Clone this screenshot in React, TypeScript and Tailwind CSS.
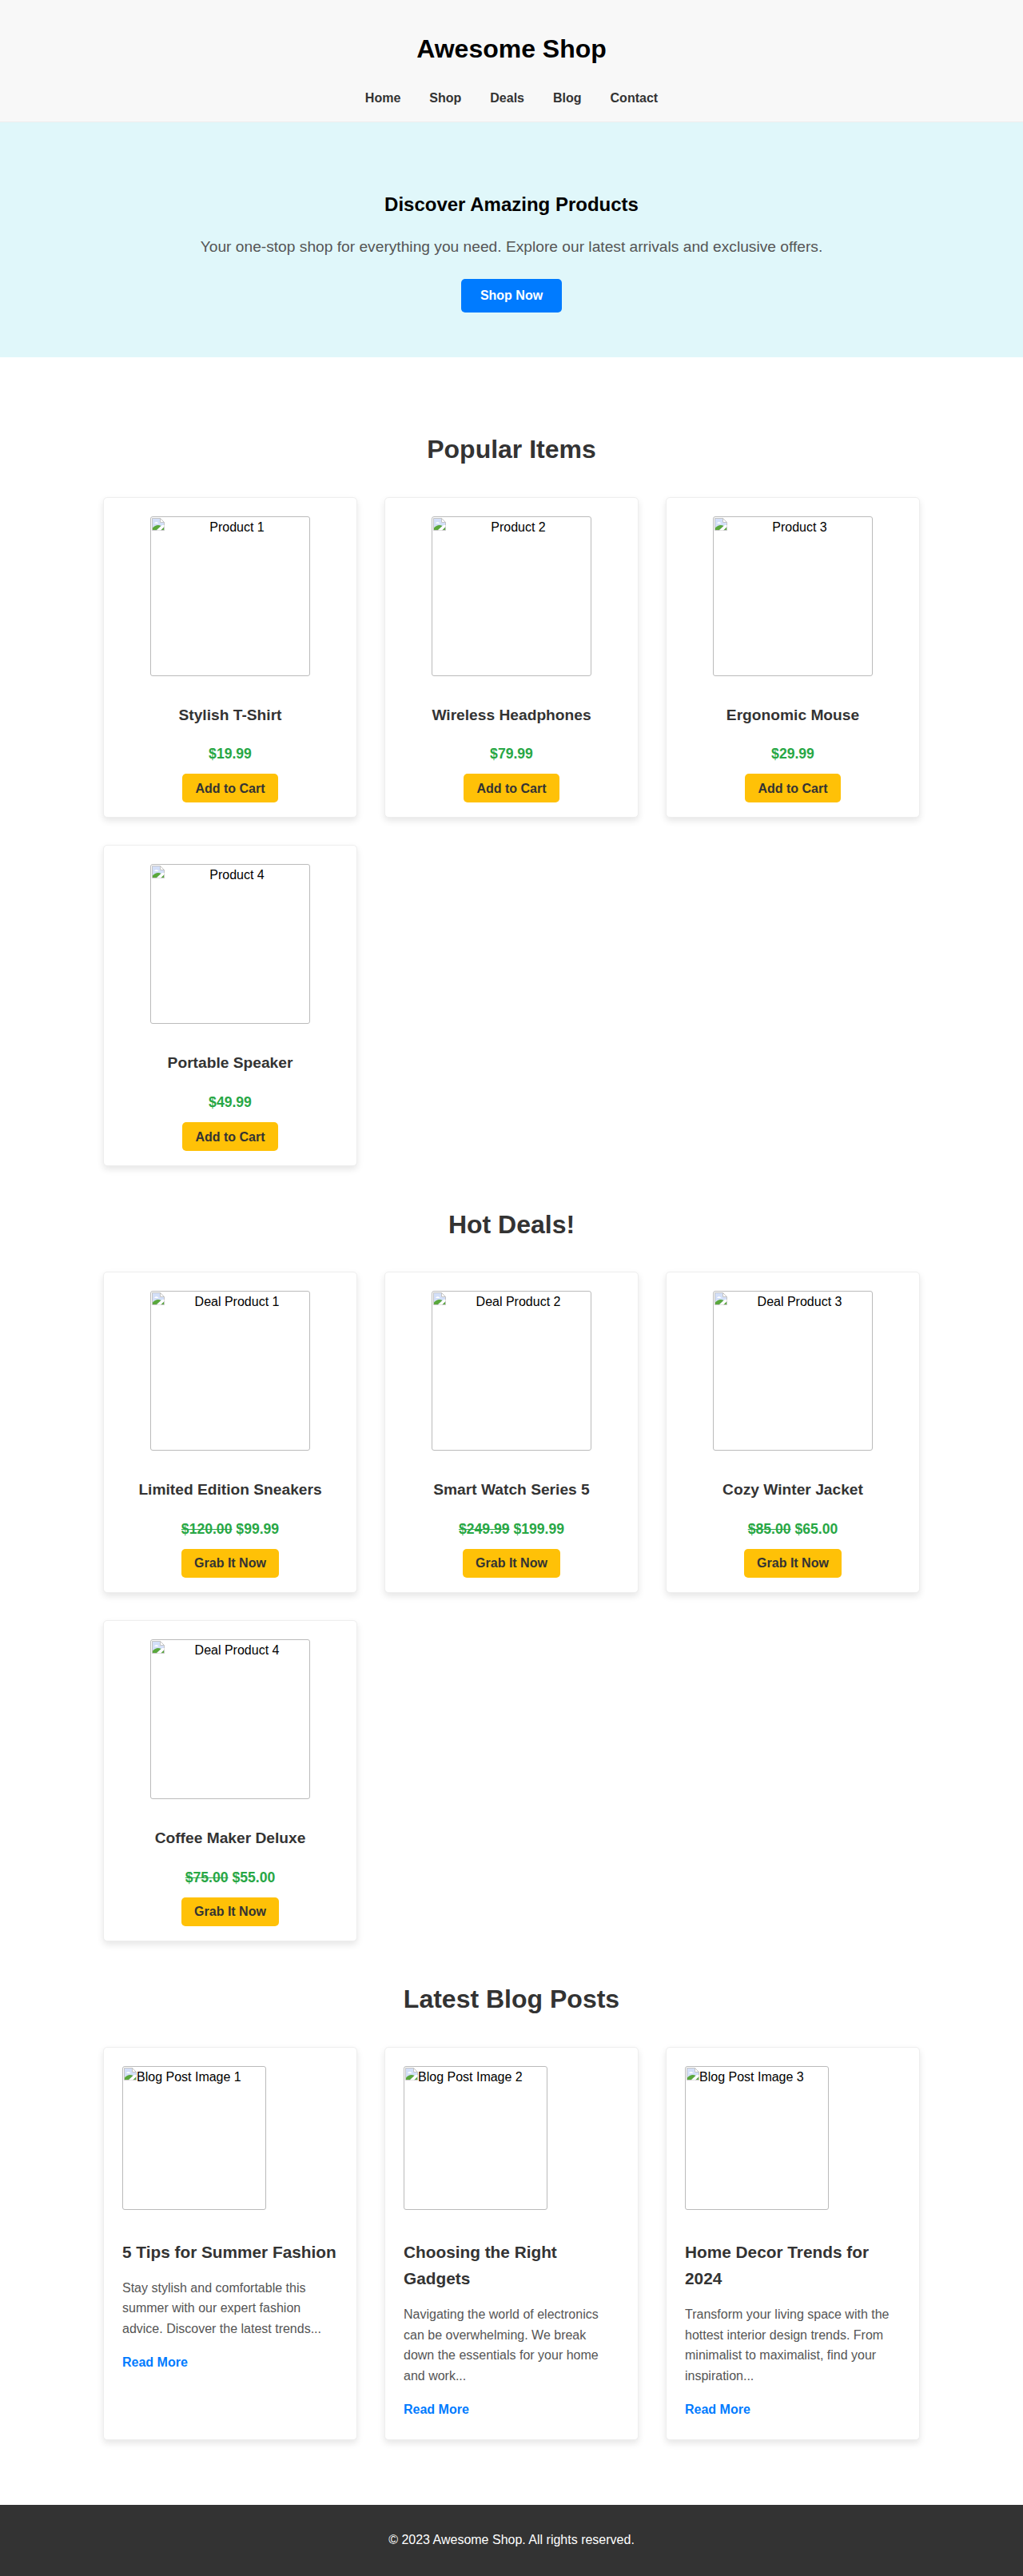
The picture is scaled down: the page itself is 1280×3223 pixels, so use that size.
const sans = "font-['Liberation_Sans',Arial,sans-serif]"

const products = [
  { alt: "Product 1", name: "Stylish T-Shirt", price: "$19.99" },
  { alt: "Product 2", name: "Wireless Headphones", price: "$79.99" },
  { alt: "Product 3", name: "Ergonomic Mouse", price: "$29.99" },
  { alt: "Product 4", name: "Portable Speaker", price: "$49.99" },
]

const deals = [
  { alt: "Deal Product 1", name: "Limited Edition Sneakers", old: "$120.00", price: "$99.99" },
  { alt: "Deal Product 2", name: "Smart Watch Series 5", old: "$249.99", price: "$199.99" },
  { alt: "Deal Product 3", name: "Cozy Winter Jacket", old: "$85.00", price: "$65.00" },
  { alt: "Deal Product 4", name: "Coffee Maker Deluxe", old: "$75.00", price: "$55.00" },
]

const posts = [
  {
    alt: "Blog Post Image 1",
    title: "5 Tips for Summer Fashion",
    text: "Stay stylish and comfortable this summer with our expert fashion advice. Discover the latest trends...",
  },
  {
    alt: "Blog Post Image 2",
    title: "Choosing the Right Gadgets",
    text: "Navigating the world of electronics can be overwhelming. We break down the essentials for your home and work...",
  },
  {
    alt: "Blog Post Image 3",
    title: "Home Decor Trends for 2024",
    text: "Transform your living space with the hottest interior design trends. From minimalist to maximalist, find your inspiration...",
  },
]

// the browser's broken image glyph
function BrokenIcon() {
  return (
    <svg width="16" height="16" viewBox="0 0 16 16" className="mt-[1px] shrink-0">
      <path d="M0.5 0.5H10.5L15.5 5.5V15.5H0.5Z" fill="#d3dff8" stroke="#c4c4c4" />
      <path d="M10.5 0.5V5.5H15.5Z" fill="#fff" stroke="#c4c4c4" />
      <path d="M3 7C4 4.5 7 4.5 8.5 7Z" fill="#fff" />
      <path d="M1 15V12.5C4 9 8 8 11.5 10L6 15Z" fill="#5aa83c" />
      <path d="M11.5 15L15 11.5V15Z" fill="#5aa83c" />
      <path d="M6 15.5L13 9L15.5 9V11L11 15.5Z" fill="#fff" />
    </svg>
  )
}

function BrokenImage({ alt, size, center }: { alt: string; size: string; center?: boolean }) {
  return (
    <div className={`${size} rounded-[3px] border border-[#bbbbbb] text-left text-[16px] leading-[25.6px] text-black`}>
      <div className="flex pl-[1px]">
        <BrokenIcon />
        <span className={center ? "flex-1 text-center" : ""}>{alt}</span>
      </div>
    </div>
  )
}

function Card({ children, className = "" }: { children: React.ReactNode; className?: string }) {
  return (
    <div className={`rounded-[5px] border border-[#eeeeee] bg-white shadow-[0_4px_8px_rgba(0,0,0,0.1)] ${className}`}>
      {children}
    </div>
  )
}

function Heading({ children }: { children: React.ReactNode }) {
  return <h2 className="mb-[33.4px] text-center text-[32px] font-bold leading-[51.2px] text-[#333333]">{children}</h2>
}

function ProductCard({ alt, name, children, cta }: { alt: string; name: string; children: React.ReactNode; cta: string }) {
  return (
    <Card className="flex flex-col items-center px-[23px] pb-[18px] pt-[23px] text-center">
      <BrokenImage alt={alt} size="h-[200px] w-[200px]" center />
      <h3 className="mt-[34px] text-[19.2px] font-bold leading-[30.72px] text-[#333333]">{name}</h3>
      <p className="mt-[19px] text-[17.6px] font-bold leading-[28.16px] text-[#28a745]">{children}</p>
      <button className="mt-[11px] h-[36px] rounded-[5px] bg-[#ffc107] px-[16.5px] text-[16px] font-bold text-[#333333]">{cta}</button>
    </Card>
  )
}

export default function App() {
  return (
    <div className={`${sans} bg-white text-[16px] leading-[25.6px] text-[#333333]`}>
      <header className="h-[153px] border-b border-[#eeeeee] bg-[#f8f8f8] pt-[36.4px] text-center">
        <h1 className="text-[32px] font-bold leading-[51.2px] text-black">Awesome Shop</h1>
        <nav className="mt-[22px] flex justify-center gap-[36px] font-bold">
          {["Home", "Shop", "Deals", "Blog", "Contact"].map((item) => (
            <a key={item} href="#">{item}</a>
          ))}
        </nav>
      </header>

      <section className="h-[294px] bg-[#e0f7fa] pt-[84px] text-center">
        <h2 className="text-[24px] font-bold leading-[38.4px] text-black">Discover Amazing Products</h2>
        <p className="mt-[19px] text-[19.2px] leading-[30.72px] text-[#555555]">
          Your one-stop shop for everything you need. Explore our latest arrivals and exclusive offers.
        </p>
        <button className="mx-auto mt-[23.6px] block h-[42px] w-[126px] rounded-[5px] bg-[#007bff] text-[16px] font-bold text-white">Shop Now</button>
      </section>

      <main className="mx-auto w-[1022px] pb-[81px] pt-[90px]">
        <Heading>Popular Items</Heading>
        <div className="grid grid-cols-3 gap-[34px]">
          {products.map((p) => (
            <ProductCard key={p.alt} alt={p.alt} name={p.name} cta="Add to Cart">{p.price}</ProductCard>
          ))}
        </div>

        <div className="mt-[47.4px]">
          <Heading>Hot Deals!</Heading>
          <div className="grid grid-cols-3 gap-[34px]">
            {deals.map((d) => (
              <ProductCard key={d.alt} alt={d.alt} name={d.name} cta="Grab It Now">
                <s>{d.old}</s> {d.price}
              </ProductCard>
            ))}
          </div>
        </div>

        <div className="mt-[47.4px]">
          <Heading>Latest Blog Posts</Heading>
          <div className="grid grid-cols-3 gap-[34px]">
            {posts.map((post) => (
              <Card key={post.alt} className="px-[23px] pb-[24px] pt-[23px]">
                <BrokenImage alt={post.alt} size="h-[180px] w-[180px]" />
                <h3 className="mt-[36px] text-[20.8px] font-bold leading-[33.28px] text-[#333333]">{post.title}</h3>
                <p className="mt-[15.4px] text-[16px] leading-[25.6px] text-[#555555]">{post.text}</p>
                <a href="#" className="mt-[16.6px] block font-bold text-[#007bff]">Read More</a>
              </Card>
            ))}
          </div>
        </div>
      </main>

      <footer className="h-[89px] bg-[#333333] pt-[31px] text-center text-white">
        © 2023 Awesome Shop. All rights reserved.
      </footer>
    </div>
  )
}
